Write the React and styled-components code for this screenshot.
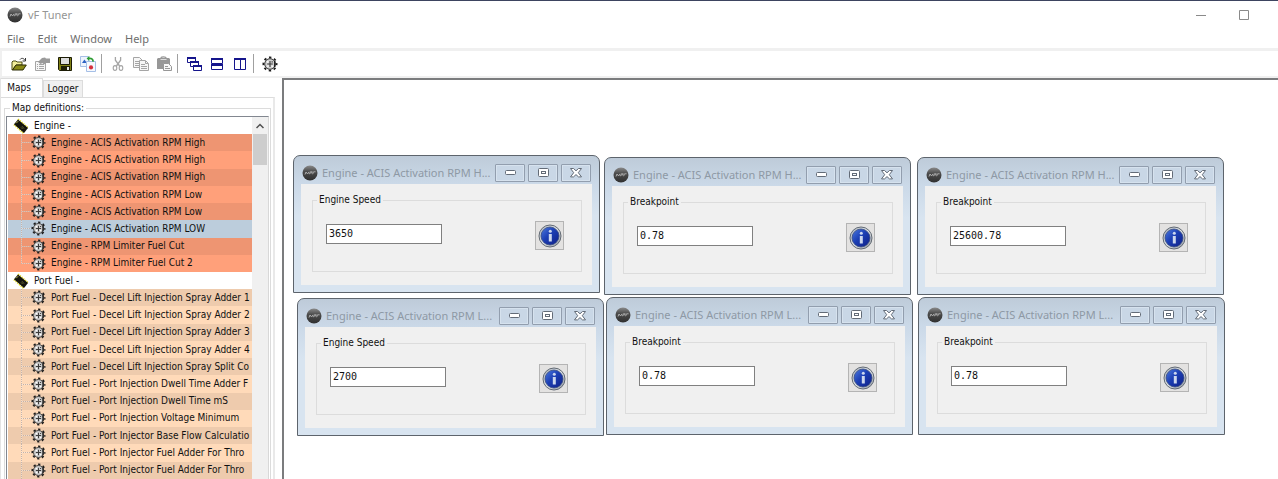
import React, { useState } from "react";
import styled, { createGlobalStyle, css } from "styled-components";

const tahoma = '"DejaVu Sans Condensed", "DejaVu Sans", "Noto Sans", sans-serif';
const segoe = '"Noto Sans", "Open Sans", sans-serif';

const GlobalStyle = createGlobalStyle`
  *, *::before, *::after { box-sizing: border-box; }
  html, body, #root { height: 100%; }
  body { margin: 0; overflow: hidden; background: #ffffff; font-family: ${tahoma}; font-size: 10px; color: #111111; }
  button, input { font: inherit; color: inherit; margin: 0; padding: 0; }
  svg { display: block; flex: none; }
`;

const Shell = styled.div`
  display: flex;
  flex-direction: column;
  height: 100vh;
  border-top: 1px solid #3d4460;
`;

const TitleBar = styled.header`
  display: flex;
  align-items: center;
  height: 28px;
  padding: 0 13px 0 7px;
  font-family: ${segoe};
`;

const AppTitle = styled.h1`
  flex: 1;
  margin: 0 0 0 5px;
  font-size: 11px;
  line-height: 16px;
  font-weight: 400;
  color: #959595;
`;

const SystemButton = styled.button`
  display: grid;
  place-items: center;
  width: 43px;
  height: 28px;
  border: 0;
  background: none;
`;

const MenuBar = styled.nav`
  display: flex;
  align-items: center;
  gap: 13px;
  height: 19px;
  padding: 0 7px;
  font-family: ${segoe};
`;

const MenuItem = styled.button`
  border: 0;
  background: none;
  font-size: 11px;
  line-height: 16px;
  color: #6e6e6e;
`;

const ToolBar = styled.div`
  display: flex;
  align-items: center;
  height: 30px;
  padding: 0 5px;
  border: solid #f0f0f0;
  border-width: 3px 0 2px 2px;
`;

const ToolButton = styled.button`
  display: grid;
  place-items: center;
  width: 23px;
  height: 22px;
  border: 0;
  background: none;
`;

const ToolSeparator = styled.div`
  width: 7px;
  height: 19px;
  padding-left: 2px;
  &::before { content: ""; display: block; width: 1px; height: 100%; background: #a0a0a0; }
`;

const Workspace = styled.div`
  display: flex;
  flex: 1;
  min-height: 0;
`;

const SidePanel = styled.aside`
  display: flex;
  flex-direction: column;
  width: 282px;
  flex: none;
  padding: 0 7px 0 0;
  border-left: 1px solid #e4e4e4;
  min-height: 0;
`;

const Tabs = styled.div`
  display: flex;
  align-items: flex-end;
  height: 19px;
`;

const Tab = styled.button`
  width: ${(p) => (p.$active ? 42 : 40)}px;
  height: ${(p) => (p.$active ? 19 : 17)}px;
  padding: ${(p) => (p.$active ? "0 5px 1px 0" : "0 0 1px")};
  border: 1px solid #dcdcdc;
  border-bottom: 0;
  border-left-width: ${(p) => (p.$active ? 0 : 1)}px;
  background: ${(p) => (p.$active ? "#ffffff" : "#f0f0f0")};
  line-height: 14px;
  white-space: nowrap;
`;

const TabPage = styled.div`
  display: flex;
  flex: 1;
  min-height: 0;
  padding: 3px 2px 0 3px;
  border-top: 1px solid #dcdcdc;
  border-right: 2px solid #e9e9e9;
`;

const GroupBox = styled.fieldset`
  min-width: 0;
  margin: 0;
  border: 1px solid #dcdcdc;
`;

const TreeGroup = styled(GroupBox)`
  flex: 1;
  padding: 1px 1px 0;
  border-bottom: 0;
`;

const Legend = styled.legend`
  margin-left: 4px;
  padding: 0 2px;
  line-height: 14px;
`;

const TreeFrame = styled.div`
  display: flex;
  height: calc(100vh - 115px);
  border: solid #828790;
  border-width: 1px 1px 0;
  border-right-color: #d8d8d8;
  overflow: hidden;
`;

const TreeList = styled.ul`
  display: grid;
  grid-auto-rows: 1fr;
  flex: 1;
  min-width: 0;
  height: 379px;
  margin: 0;
  padding: 0 0 0 1px;
  list-style: none;
`;

const rowColors = {
  engine: ["#ee9572", "#ffa07a"],
  port: ["#eecbad", "#ffdab9"],
};

const treeGuides = css`
  &::before {
    content: "";
    flex: none;
    width: 10px;
    margin-left: 13px;
    background:
      repeating-linear-gradient(to bottom, #c4b3aa 0 1px, #fff5 1px 2px) 0 0 / 1px ${(p) => (p.$last ? "50%" : "100%")} no-repeat,
      repeating-linear-gradient(to right, #c4b3aa 0 1px, #fff5 1px 2px) 0 50% / 10px 1px no-repeat;
  }
`;

const MapRow = styled.li`
  display: flex;
  align-items: stretch;
  overflow: hidden;
  min-height: 0;
  background: ${(p) => (p.$selected ? "#bccddc" : rowColors[p.$tone][p.$odd ? 1 : 0])};
  ${treeGuides}
`;

const GroupRow = styled.li`
  display: flex;
  min-height: 0;
  padding-left: 5px;
  background: #ffffff;
`;

const RowButton = styled.button`
  display: flex;
  align-items: center;
  flex: none;
  gap: 5px;
  border: 0;
  background: none;
  line-height: 16px;
  white-space: nowrap;
`;

const ScrollBar = styled.div`
  width: 16px;
  flex: none;
  background: #f0f0f0;
`;

const ScrollArrow = styled.button`
  display: grid;
  place-items: center;
  width: 16px;
  height: 17px;
  border: 0;
  background: none;
`;

const ScrollThumb = styled.div`
  width: 14px;
  height: 31px;
  margin: 0 auto;
  background: #cdcdcd;
`;

const Desktop = styled.main`
  position: relative;
  flex: 1;
  min-width: 0;
  overflow: hidden;
  border: solid #7b7c7e;
  border-width: 2px 0 0 2px;
  background: #ffffff;
`;

const MapWindow = styled.section`
  position: absolute;
  left: ${(p) => p.$x}px;
  top: ${(p) => p.$y}px;
  width: 307px;
  padding: 0 7px 7px;
  border: 1px solid #5d646c;
  border-radius: 7px 7px 0 0;
  background: linear-gradient(#becbd9 0, #cbd9e8 28px, #d8e4f0 60px);
`;

const WindowBar = styled.header`
  display: flex;
  align-items: center;
  height: 28px;
  padding: 5px 1px 0;
`;

const WindowTitle = styled.h2`
  flex: 1;
  min-width: 0;
  margin: 0 0 0 4px;
  font-family: ${segoe};
  font-size: 11px;
  line-height: 16px;
  font-weight: 400;
  white-space: nowrap;
  color: #8e99a5;
`;

const WindowButtons = styled.div`
  display: flex;
  gap: 3px;
`;

const WindowButton = styled.button`
  display: grid;
  place-items: center;
  width: 30px;
  height: 18px;
  border: 1px solid #929eae;
  border-radius: 1px;
  background: #c9d7e6;
  box-shadow: inset 0 0 0 1px #d6e2ee;
`;

const WindowBody = styled.div`
  padding: 9px 10px 13px 11px;
  background: #f0f0f0;
`;

const ValueGroup = styled(GroupBox)`
  padding: 14px 17px 21px 13px;
  & > ${Legend} { margin-left: -9px; }
`;

const ValueRow = styled.div`
  display: flex;
  align-items: center;
  justify-content: space-between;
`;

const ValueInput = styled.input`
  width: 116px;
  height: 20px;
  margin-bottom: 3px;
  padding: 0 2px 1px;
  border: 1px solid #808080;
  border-radius: 0;
  background: #ffffff;
  font-family: "DejaVu Sans Mono", monospace;
  font-size: 10px;
`;

const InfoButton = styled.button`
  display: grid;
  place-items: center;
  width: 29px;
  height: 29px;
  border: 1px solid #b4b4b4;
  background: #e3e2e1;
`;

const Logo = () => (
  <svg width="16" height="16" viewBox="0 0 16 16" aria-hidden="true">
    <defs>
      <linearGradient id="logoBall" x1="0" y1="0" x2="0" y2="1">
        <stop offset="0" stopColor="#8a8a8a" />
        <stop offset="0.4" stopColor="#4c4c4c" />
        <stop offset="1" stopColor="#303030" />
      </linearGradient>
    </defs>
    <circle cx="8" cy="8" r="7.500" fill="url(#logoBall)" />
    <path d="M3 9.500 4 7l1.600 2L7 6.800M7.500 9.200 8.300 6.800h2L9.600 8H8.400M10.600 9.200l.9-2.400H13.600" fill="none" stroke="#b5b5b5" strokeWidth="0.900" />
  </svg>
);

const GearIcon = ({ size = 16 }) => (
  <svg width={size} height={size} viewBox="0 0 16 16" aria-hidden="true">
    <circle cx="8" cy="8" r="6.600" fill="none" stroke="#1c1c1c" strokeWidth="1.800" strokeDasharray="2.400 2.780" strokeDashoffset="1.200" />
    <circle cx="8" cy="8" r="5.300" fill="#cfcfcf" stroke="#333333" strokeWidth="1" />
    <path d="M8 5v6M5.200 8h5.600" stroke="#3c3c3c" strokeWidth="1.100" />
    <path d="M5 5.200h1.500v1.500H5zM5.200 9.500h1.500v1.300H5.200zM9.500 9.500h1.400v1.400H9.500z" fill="#ffffff" />
    <path d="M9.600 5.200h1.200v1.200H9.600z" fill="#444444" />
    <path d="M12.800 5v6" stroke="#111111" strokeWidth="1.300" />
  </svg>
);

const ChipIcon = () => (
  <svg width="16" height="16" viewBox="0 0 16 16" aria-hidden="true">
    <path d="M5 1.200 15 10M1 6.400 10.500 15" stroke="#e3d91c" strokeWidth="2" strokeDasharray="1.300 1" />
    <path d="M5 1.400 15 10 11 15 1 6.200Z" fill="#14140c" />
    <path d="M3.200 5.200 5.200 3.200" stroke="#d0c850" strokeWidth="0.900" />
    <path d="M9 8.200 11 10.600M8 9.400l1.600 1.600" stroke="#77773a" strokeWidth="0.800" />
  </svg>
);

const OpenIcon = () => (
  <svg width="16" height="16" viewBox="0 0 16 16" aria-hidden="true">
    <path d="M1 14V6l1-1h3l1 1h5v3H5L1.500 14Z" fill="#f2ee9a" stroke="#4a4a10" />
    <path d="M1.500 14 5 9h10.300L12 14Z" fill="#8a8a16" stroke="#2c2c06" />
    <path d="M9 3.500c1.500-1.800 3.600-1.400 4.800.6M14.500 2v3h-3" fill="none" stroke="#333333" />
  </svg>
);

const PropertiesIcon = () => (
  <svg width="16" height="16" viewBox="0 0 16 16" aria-hidden="true">
    <path d="M1.500 5.500h10v9h-10z" fill="#f6f6f6" stroke="#a5a5a5" />
    <path d="M3 8.500h1M5 8.500h5M3 10.500h1M5 10.500h5M3 12.500h1M5 12.500h5" stroke="#a5a5a5" />
    <path d="M4 6l4-4 3-.6 1 1H16V7h-4L10 8.400 8.400 7 6.600 8Z" fill="#9a9a9a" />
  </svg>
);

const SaveIcon = () => (
  <svg width="16" height="16" viewBox="0 0 16 16" aria-hidden="true">
    <path d="M1.500 1.500h13v13h-12l-1-1Z" fill="#808014" stroke="#1c1c06" />
    <path d="M4 2h8v6H4z" fill="#dcdcdc" />
    <path d="M3.500 2v6.500h9V2" fill="none" stroke="#1c1c06" />
    <path d="M4 10h9v5H4z" fill="#1c1c06" />
    <path d="M10 11h2v3h-2z" fill="#e6e6e6" />
  </svg>
);

const ConvertIcon = () => (
  <svg width="16" height="16" viewBox="0 0 16 16" aria-hidden="true">
    <path d="M.5.5h8v10h-8z" fill="#eef4fd" stroke="#a5bfe6" />
    <path d="M2 7 4.400 3.400 7 7Z" fill="#2d62c4" />
    <path d="M6.500 5.500h9v10h-9z" fill="#f6f9fe" stroke="#a5bfe6" />
    <circle cx="11" cy="11.400" r="2.100" fill="#d6303c" />
    <path d="M8 2.600c3-.8 5 .2 5.200 3" fill="none" stroke="#2d9c33" strokeWidth="1.800" />
    <path d="M9.400 0v5L6.600 2.600Z" fill="#2d9c33" />
  </svg>
);

const CutIcon = () => (
  <svg width="16" height="16" viewBox="0 0 16 16" aria-hidden="true">
    <path d="M5.400 1v3.200L9.600 10M10.600 1v3.200L6.400 10" fill="none" stroke="#a5a5a5" strokeWidth="1.300" />
    <ellipse cx="5" cy="12" rx="1.800" ry="2.400" fill="none" stroke="#a5a5a5" strokeWidth="1.100" />
    <ellipse cx="11" cy="12" rx="1.800" ry="2.400" fill="none" stroke="#a5a5a5" strokeWidth="1.100" />
  </svg>
);

const CopyIcon = () => (
  <svg width="16" height="16" viewBox="0 0 16 16" aria-hidden="true">
    <path d="M.5 1.500h6l3 3v7h-9z" fill="#f7f7f7" stroke="#a5a5a5" />
    <path d="M2 5.500h4M2 7.500h4M2 9.500h4" stroke="#a5a5a5" />
    <path d="M6.500 4.500h6l3 3v7h-9z" fill="#f7f7f7" stroke="#a5a5a5" />
    <path d="M8 8.500h4M8 10.500h6M8 12.500h6M12.500 5v2.500H15" fill="none" stroke="#a5a5a5" />
  </svg>
);

const PasteIcon = () => (
  <svg width="16" height="16" viewBox="0 0 16 16" aria-hidden="true">
    <path d="M2 2h11l1 1v10H1V3Z" fill="#979797" />
    <path d="M4.500 3.500h6" stroke="#dddddd" />
    <path d="M5 2c0-1.500 5-1.500 5 0" fill="none" stroke="#979797" strokeWidth="1.200" />
    <path d="M7.500 7.500h5l3 3v4h-8z" fill="#f7f7f7" stroke="#979797" />
    <path d="M9 10.500h3M9 12.500h5" stroke="#979797" />
  </svg>
);

const CascadeIcon = () => (
  <svg width="16" height="16" viewBox="0 0 16 16" aria-hidden="true">
    <g fill="#ffffff" stroke="#15158c">
      <path d="M1.500 1.500h8v5h-8z" />
      <path d="M4.500 5.500h8v5h-8z" />
      <path d="M7.500 9.500h8v5h-8z" />
    </g>
    <path d="M1 1h9v2H1zM4 5h9v2H4zM7 9h9v2H7z" fill="#15158c" />
  </svg>
);

const TileRowsIcon = () => (
  <svg width="16" height="16" viewBox="0 0 16 16" aria-hidden="true">
    <path d="M2.500 2.500h11v5h-11zM2.500 8.500h11v5h-11z" fill="#ffffff" stroke="#15158c" />
    <path d="M2 2h12v2H2zM2 8h12v2H2z" fill="#15158c" />
  </svg>
);

const TileColumnsIcon = () => (
  <svg width="16" height="16" viewBox="0 0 16 16" aria-hidden="true">
    <path d="M2.500 2.500h6v11h-6zM8.500 2.500h5v11h-5z" fill="#ffffff" stroke="#15158c" />
    <path d="M2 2h12v2H2z" fill="#15158c" />
  </svg>
);

const InfoIcon = () => (
  <svg width="24" height="24" viewBox="0 0 24 24" aria-hidden="true">
    <defs>
      <linearGradient id="infoDisc" x1="0" y1="0" x2="1" y2="1">
        <stop offset="0" stopColor="#4d7be0" />
        <stop offset="0.45" stopColor="#1c3fb4" />
        <stop offset="1" stopColor="#0f1f86" />
      </linearGradient>
      <linearGradient id="infoRim" x1="0" y1="0" x2="1" y2="1">
        <stop offset="0" stopColor="#aab2ba" />
        <stop offset="0.5" stopColor="#e3e7ea" />
        <stop offset="1" stopColor="#8d949c" />
      </linearGradient>
    </defs>
    <circle cx="12" cy="12" r="11" fill="url(#infoRim)" stroke="#626a74" />
    <circle cx="12" cy="12" r="9" fill="url(#infoDisc)" stroke="#3a4d80" strokeWidth="0.800" />
    <circle cx="12.300" cy="7.200" r="1.500" fill="#cdd8ee" />
    <path d="M10.800 10h3v7.500h-3z" fill="#cdd8ee" />
  </svg>
);

const MinimizeGlyph = () => (
  <svg width="11" height="5" viewBox="0 0 11 5" aria-hidden="true">
    <rect x="0.500" y="0.500" width="10" height="4" rx="1" fill="#ffffff" stroke="#626b77" />
  </svg>
);

const RestoreGlyph = () => (
  <svg width="11" height="9" viewBox="0 0 11 9" aria-hidden="true">
    <rect x="0.500" y="0.500" width="10" height="8" rx="1" fill="#ffffff" stroke="#626b77" />
    <rect x="3.500" y="3.500" width="4" height="2" fill="#ffffff" stroke="#626b77" />
  </svg>
);

const CloseGlyph = () => (
  <svg width="12" height="10" viewBox="0 0 12 10" aria-hidden="true">
    <path d="M.5.5h3L6 2.800 8.500.500h3L8.300 4.700l3.200 4.200h-3L6 6.600 3.500 8.900h-3L3.700 4.700Z" fill="#ffffff" stroke="#626b77" />
  </svg>
);

const tools = [
  ["Open", OpenIcon],
  ["Properties", PropertiesIcon],
  ["Save", SaveIcon],
  ["Convert", ConvertIcon],
  null,
  ["Cut", CutIcon],
  ["Copy", CopyIcon],
  ["Paste", PasteIcon],
  null,
  ["Cascade", CascadeIcon],
  ["Tile horizontally", TileRowsIcon],
  ["Tile vertically", TileColumnsIcon],
  null,
  ["Settings", GearIcon],
];

const tree = [
  {
    name: "Engine -",
    tone: "engine",
    maps: [
      "Engine - ACIS Activation RPM High",
      "Engine - ACIS Activation RPM High",
      "Engine - ACIS Activation RPM High",
      "Engine - ACIS Activation RPM Low",
      "Engine - ACIS Activation RPM Low",
      "Engine - ACIS Activation RPM LOW",
      "Engine - RPM Limiter Fuel Cut",
      "Engine - RPM Limiter Fuel Cut 2",
    ],
  },
  {
    name: "Port Fuel -",
    tone: "port",
    maps: [
      "Port Fuel - Decel Lift Injection Spray Adder 1",
      "Port Fuel - Decel Lift Injection Spray Adder 2",
      "Port Fuel - Decel Lift Injection Spray Adder 3",
      "Port Fuel - Decel Lift Injection Spray Adder 4",
      "Port Fuel - Decel Lift Injection Spray Split Co",
      "Port Fuel - Port Injection Dwell Time Adder F",
      "Port Fuel - Port Injection Dwell Time mS",
      "Port Fuel - Port Injection Voltage Minimum",
      "Port Fuel - Port Injector Base Flow Calculatio",
      "Port Fuel - Port Injector Fuel Adder For Thro",
      "Port Fuel - Port Injector Fuel Adder For Thro",
    ],
  },
];

const windows = [
  { x: 9, y: 75, title: "Engine - ACIS Activation RPM H...", label: "Engine Speed", value: "3650" },
  { x: 320, y: 77, title: "Engine - ACIS Activation RPM H...", label: "Breakpoint", value: "0.78" },
  { x: 633, y: 77, title: "Engine - ACIS Activation RPM H...", label: "Breakpoint", value: "25600.78" },
  { x: 13, y: 218, title: "Engine - ACIS Activation RPM L...", label: "Engine Speed", value: "2700" },
  { x: 322, y: 217, title: "Engine - ACIS Activation RPM L...", label: "Breakpoint", value: "0.78" },
  { x: 634, y: 217, title: "Engine - ACIS Activation RPM L...", label: "Breakpoint", value: "0.78" },
];

function MapEditor({ id, x, y, title, label, value }) {
  return (
    <MapWindow $x={x} $y={y}>
      <WindowBar>
        <Logo />
        <WindowTitle>{title}</WindowTitle>
        <WindowButtons>
          <WindowButton aria-label="Minimize"><MinimizeGlyph /></WindowButton>
          <WindowButton aria-label="Restore"><RestoreGlyph /></WindowButton>
          <WindowButton aria-label="Close"><CloseGlyph /></WindowButton>
        </WindowButtons>
      </WindowBar>
      <WindowBody>
        <ValueGroup>
          <Legend><label htmlFor={id}>{label}</label></Legend>
          <ValueRow>
            <ValueInput id={id} type="text" defaultValue={value} />
            <InfoButton aria-label="Information"><InfoIcon /></InfoButton>
          </ValueRow>
        </ValueGroup>
      </WindowBody>
    </MapWindow>
  );
}

export default function App() {
  const [selected, setSelected] = useState("0-5");
  return (
    <Shell>
      <GlobalStyle />
      <TitleBar>
        <Logo />
        <AppTitle>vF Tuner</AppTitle>
        <SystemButton aria-label="Minimize">
          <svg width="10" height="10"><path d="M0 5.500h10" stroke="#8a8a8a" /></svg>
        </SystemButton>
        <SystemButton aria-label="Maximize">
          <svg width="10" height="10"><path d="M.5.5h9v9h-9z" fill="none" stroke="#8a8a8a" /></svg>
        </SystemButton>
      </TitleBar>
      <MenuBar>
        {["File", "Edit", "Window", "Help"].map((m) => <MenuItem key={m}>{m}</MenuItem>)}
      </MenuBar>
      <ToolBar role="toolbar">
        {tools.map((tool, i) => {
          if (!tool) return <ToolSeparator key={i} />;
          const [name, Icon] = tool;
          return <ToolButton key={i} aria-label={name}><Icon /></ToolButton>;
        })}
      </ToolBar>
      <Workspace>
        <SidePanel>
          <Tabs role="tablist">
            <Tab role="tab" aria-selected="true" $active>Maps</Tab>
            <Tab role="tab" aria-selected="false">Logger</Tab>
          </Tabs>
          <TabPage>
            <TreeGroup>
              <Legend>Map definitions:</Legend>
              <TreeFrame>
                <TreeList>
                  {tree.map((group, g) => (
                    <React.Fragment key={group.name}>
                      <GroupRow>
                        <RowButton><ChipIcon />{group.name}</RowButton>
                      </GroupRow>
                      {group.maps.map((map, i) => {
                        const key = `${g}-${i}`;
                        return (
                          <MapRow
                            key={key}
                            $tone={group.tone}
                            $odd={i % 2 === 1}
                            $selected={selected === key}
                            $last={g === 0 && i === group.maps.length - 1}
                          >
                            <RowButton onClick={() => setSelected(key)}>
                              <GearIcon size={15} />{map}
                            </RowButton>
                          </MapRow>
                        );
                      })}
                    </React.Fragment>
                  ))}
                  <MapRow $tone="port" $odd />
                </TreeList>
                <ScrollBar>
                  <ScrollArrow aria-label="Scroll up">
                    <svg width="8" height="6"><path d="M.5 5 4 1.500 7.500 5" fill="none" stroke="#505050" strokeWidth="1.500" /></svg>
                  </ScrollArrow>
                  <ScrollThumb />
                </ScrollBar>
              </TreeFrame>
            </TreeGroup>
          </TabPage>
        </SidePanel>
        <Desktop>
          {windows.map((w, i) => <MapEditor key={i} id={`value-${i}`} {...w} />)}
        </Desktop>
      </Workspace>
    </Shell>
  );
}
